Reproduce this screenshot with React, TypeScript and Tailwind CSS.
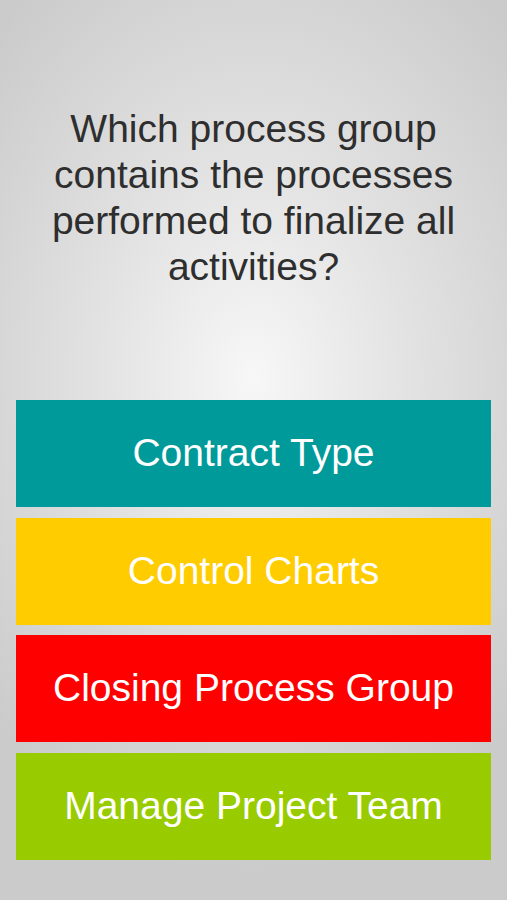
import React from 'react'

type Answer = {
  label: string
  color: string
}

const answers: Answer[] = [
  { label: 'Contract Type', color: 'bg-[#009a9a]' },
  { label: 'Control Charts', color: 'bg-[#ffcc00]' },
  { label: 'Closing Process Group', color: 'bg-[#ff0000]' },
  { label: 'Manage Project Team', color: 'bg-[#99cc00]' },
]

const App: React.FC = () => {
  return (
    <div
      className="w-full h-[900px] overflow-hidden bg-[radial-gradient(ellipse_70%_55%_at_50%_42%,#f7f7f7_0%,#e2e2e2_45%,#cbcbcb_100%)]"
      style={{ fontFamily: '"Liberation Sans", Arial, sans-serif' }}
    >
      <div className="pt-[106px] px-4">
        <div className="text-center text-[#2e2e2e] text-[39px] leading-[46px]">
          Which process group
          <br />
          contains the processes
          <br />
          performed to finalize all
          <br />
          activities?
        </div>
      </div>
      <div className="mt-[110px] px-4 flex flex-col gap-[10.5px]">
        {answers.map((a) => (
          <div
            key={a.label}
            className={`${a.color} h-[107px] flex items-center justify-center text-white text-[39px]`}
          >
            {a.label}
          </div>
        ))}
      </div>
    </div>
  )
}

export default App
